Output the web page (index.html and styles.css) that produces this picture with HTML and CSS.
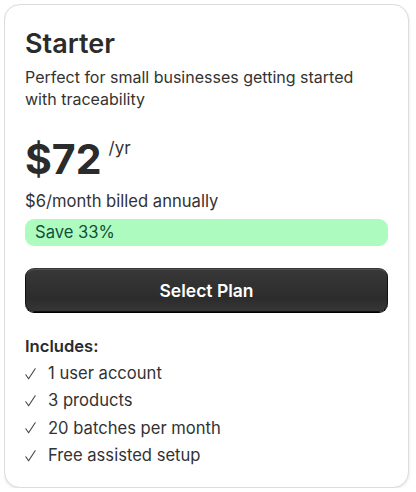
FILE: index.html
```html
<!DOCTYPE html>
<html>
<head>
<meta charset="utf-8">
<link rel="stylesheet" href="styles.css">
</head>
<body>
<div class="card">
  <h2 class="title">Starter</h2>
  <p class="desc">Perfect for small businesses getting started with traceability</p>
  <div class="price">
    <span class="amount">$72</span>
    <span class="period">/yr</span>
  </div>
  <p class="billed">$6/month billed annually</p>
  <div class="save">Save 33%</div>
  <button class="select">Select Plan</button>
  <div class="includes">
    <div class="inc-title">Includes:</div>
    <ul class="features">
      <li><svg class="check" viewBox="0 0 11 12"><path d="M0.8 6.8 L3.6 10.8 L10.2 0.8"/></svg>1 user account</li>
      <li><svg class="check" viewBox="0 0 11 12"><path d="M0.8 6.8 L3.6 10.8 L10.2 0.8"/></svg>3 products</li>
      <li><svg class="check" viewBox="0 0 11 12"><path d="M0.8 6.8 L3.6 10.8 L10.2 0.8"/></svg>20 batches per month</li>
      <li><svg class="check" viewBox="0 0 11 12"><path d="M0.8 6.8 L3.6 10.8 L10.2 0.8"/></svg>Free assisted setup</li>
    </ul>
  </div>
</div>
</body>
</html>
```

FILE: styles.css
```css
* { box-sizing: border-box; }
body {
  margin: 4px;
  background: #fff;
  font-family: Inter, "Noto Sans", sans-serif;
  color: #2b2b2b;
}
.card {
  width: 405px;
  height: 484px;
  border: 1px solid #dcdcdc;
  border-radius: 16px;
  padding: 22px 20px 20px 20px;
  box-shadow: 0 1px 3px rgba(0,0,0,0.12);
  background: #fff;
}
.title {
  margin: 0;
  font-size: 27px;
  font-weight: 600;
  line-height: 34px;
  color: #2b2b2b;
}
.desc {
  margin: 5px 0 0 0;
  font-size: 16px;
  line-height: 22px;
  color: #333;
}
.price {
  display: flex;
  align-items: flex-start;
  margin-top: 20px;
}
.amount {
  font-size: 41px;
  font-weight: 700;
  line-height: 58px;
  color: #2b2b2b;
}
.period {
  font-size: 17px;
  line-height: 17px;
  margin-left: 7px;
  margin-top: 10px;
  color: #333;
}
.billed {
  margin: 2px 0 0 0;
  font-size: 16.6px;
  line-height: 22px;
  color: #333;
}
.save {
  margin-top: 7px;
  height: 27px;
  background: #aefbbf;
  border-radius: 9px;
  padding: 0 10px;
  font-size: 16.6px;
  line-height: 27px;
  color: #11503a;
}
.select {
  display: block;
  width: 100%;
  height: 44px;
  margin-top: 22px;
  border: 1px solid #111;
  border-top-color: #3a3a3a;
  border-radius: 9px;
  background: linear-gradient(#383838, #2c2c2c 70%, #363636);
  box-shadow: inset 0 1px 0 rgba(255,255,255,0.12), 0 1px 0 #000;
  color: #fff;
  font-family: Inter, "Noto Sans", sans-serif;
  font-size: 17.5px;
  font-weight: 600;
}
.includes { margin-top: 23px; }
.inc-title {
  font-size: 16.6px;
  font-weight: 600;
  line-height: 22px;
  color: #2b2b2b;
}
.features {
  list-style: none;
  margin: 3px 0 0 0;
  padding: 0;
}
.features li {
  display: flex;
  align-items: center;
  font-size: 16.6px;
  line-height: 27.3px;
  color: #333;
}
.check {
  width: 11px;
  height: 12px;
  margin: 0 12px 0 0;
  fill: none;
  stroke: #444;
  stroke-width: 1.1;
  stroke-linecap: round;
  stroke-linejoin: round;
}
```
